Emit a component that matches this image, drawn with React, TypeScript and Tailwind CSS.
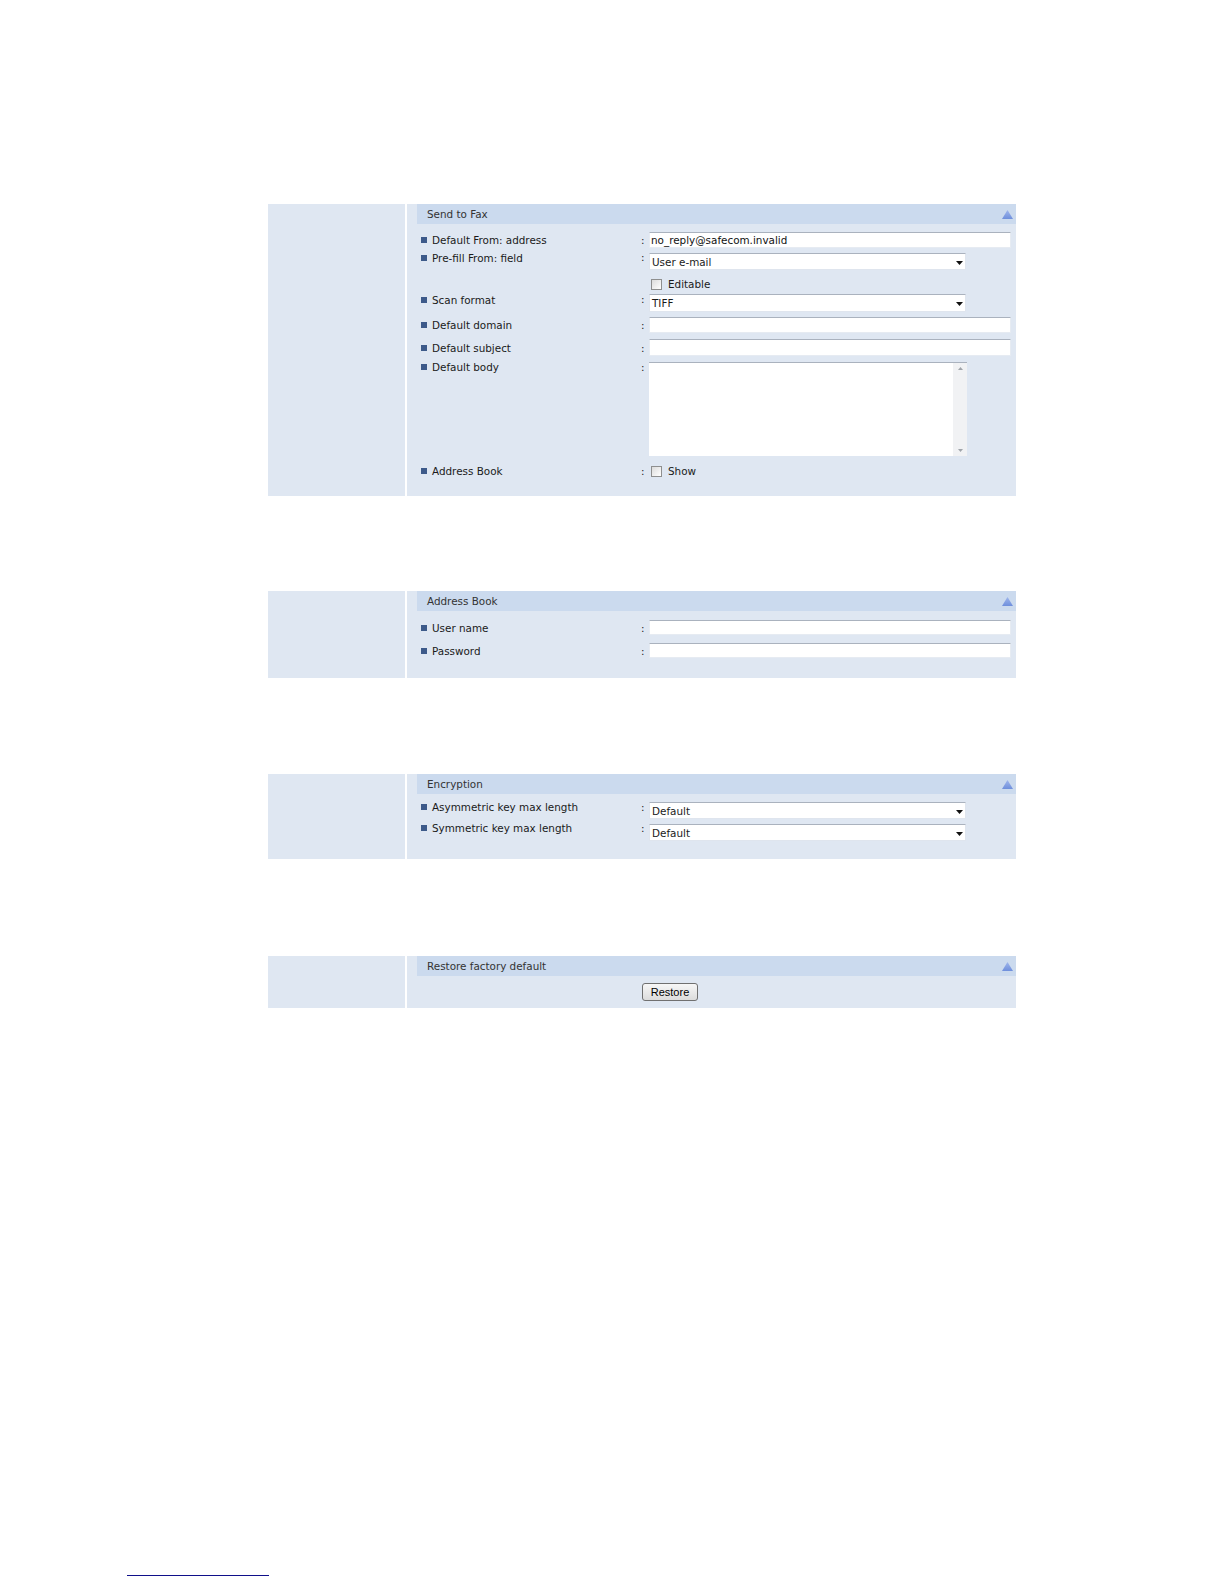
import React from "react";

function Tri() {
  return (
    <svg width="11" height="9" viewBox="0 0 11 9" className="ml-auto mr-[3px] mt-[1px]">
      <defs>
        <linearGradient id="tg" x1="0" y1="0" x2="0" y2="1">
          <stop offset="0" stopColor="#9fb6ec" />
          <stop offset="1" stopColor="#6f8fdc" />
        </linearGradient>
      </defs>
      <polygon points="5.5,0 11,9 0,9" fill="url(#tg)" />
    </svg>
  );
}

function Panel({ title, children, bodyClass }: { title: string; children: React.ReactNode; bodyClass: string }) {
  return (
    <div className="flex w-[748px] bg-[#dfe7f2]">
      <div className="w-[137px] shrink-0 bg-[#dfe7f2]" />
      <div className="w-[2px] shrink-0 bg-white" />
      <div className="flex-1 pl-[10px]">
        <div className="flex h-[20px] items-center bg-[#cbdaee] pl-[10px] text-[10.4px] leading-[12px] text-[#333]">
          <span>{title}</span>
          <Tri />
        </div>
        <div className={"pl-[4px] " + bodyClass}>{children}</div>
      </div>
    </div>
  );
}

function Label({ text, className = "" }: { text: string; className?: string }) {
  return (
    <div className={"flex w-[220px] shrink-0 items-center " + className}>
      <span className="mr-[5px] h-[6px] w-[6px] shrink-0 bg-[#3d5a8a]" />
      <span className="text-[10.4px] leading-[12px] text-[#1a1a1a]">{text}</span>
    </div>
  );
}

function Colon({ className = "" }: { className?: string }) {
  return <span className={"w-[8px] shrink-0 text-[10.4px] leading-[12px] text-[#222] " + className}>:</span>;
}

function Input({ value = "", className = "" }: { value?: string; className?: string }) {
  return (
    <div
      className={
        "flex w-[362px] items-center border border-[#e6ebf2] border-t-[#aab2be] bg-white pl-[1px] text-[10.4px] leading-[12px] text-[#111] " +
        className
      }
    >
      {value}
    </div>
  );
}

function Select({ value, className = "" }: { value: string; className?: string }) {
  return (
    <div
      className={
        "flex w-[317px] items-center justify-between border border-[#dfe5ee] border-t-[#aab2be] bg-white pl-[2px] pr-[2px] text-[10.4px] leading-[12px] text-[#1a1a1a] " +
        className
      }
    >
      <span>{value}</span>
      <svg width="7" height="4" viewBox="0 0 7 4" className="mt-[2px]">
        <path d="M0 0h7L3.5 4z" fill="#111" />
      </svg>
    </div>
  );
}

function Checkbox() {
  return (
    <span className="block h-[11px] w-[11px] shrink-0 border border-[#8e8f8f] bg-gradient-to-br from-[#dcdcdc] to-white" />
  );
}

export default function App() {
  return (
    <div className="min-h-[1584px] w-full bg-white pt-[204px] font-['DejaVu_Sans',sans-serif]">
      <div className="ml-[268px]">
        <Panel title="Send to Fax" bodyClass="pb-[19px]">
          <div className="mt-[8px] flex items-center">
            <Label text="Default From: address" />
            <Colon />
            <Input value="no_reply@safecom.invalid" className="h-[16px]" />
          </div>
          <div className="mt-[5px] flex items-start">
            <Label text="Pre-fill From: field" className="-mt-[1px]" />
            <Colon className="-mt-[2px]" />
            <Select value="User e-mail" className="h-[17px]" />
          </div>
          <div className="mt-[8px] flex items-center pl-[230px]">
            <Checkbox />
            <span className="ml-[6px] text-[10.4px] leading-[12px] text-[#1a1a1a]">Editable</span>
          </div>
          <div className="mt-[4px] flex items-start">
            <Label text="Scan format" />
            <Colon className="-mt-[1px]" />
            <Select value="TIFF" className="h-[18px]" />
          </div>
          <div className="mt-[5px] flex items-center">
            <Label text="Default domain" />
            <Colon />
            <Input className="h-[16px]" />
          </div>
          <div className="mt-[6px] flex items-center">
            <Label text="Default subject" />
            <Colon />
            <Input className="h-[17px]" />
          </div>
          <div className="mt-[6px] flex items-start">
            <Label text="Default body" className="-mt-[1px]" />
            <Colon className="-mt-[1px]" />
            <div className="flex h-[94px] w-[318px] border-t border-[#aab2be] bg-white">
              <div className="flex-1" />
              <div className="flex w-[14px] flex-col items-center justify-between bg-[#f1f2f4] py-[4px]">
                <svg width="5" height="3" viewBox="0 0 5 3">
                  <path d="M0 3h5L2.5 0z" fill="#a0a4aa" />
                </svg>
                <svg width="5" height="3" viewBox="0 0 5 3">
                  <path d="M0 0h5L2.5 3z" fill="#a0a4aa" />
                </svg>
              </div>
            </div>
          </div>
          <div className="mt-[9px] flex items-center">
            <Label text="Address Book" />
            <Colon />
            <span className="ml-[2px] flex">
              <Checkbox />
            </span>
            <span className="ml-[6px] text-[10.4px] leading-[12px] text-[#1a1a1a]">Show</span>
          </div>
        </Panel>

        <div className="mt-[95px]">
          <Panel title="Address Book" bodyClass="pb-[20px]">
            <div className="mt-[9px] flex items-center">
              <Label text="User name" />
              <Colon />
              <Input className="h-[15px]" />
            </div>
            <div className="mt-[8px] flex items-center">
              <Label text="Password" />
              <Colon />
              <Input className="h-[15px]" />
            </div>
          </Panel>
        </div>

        <div className="mt-[96px]">
          <Panel title="Encryption" bodyClass="pb-[18px]">
            <div className="mt-[8px] flex items-start">
              <Label text="Asymmetric key max length" className="-mt-[1px]" />
              <Colon className="-mt-[1px]" />
              <Select value="Default" className="h-[17px]" />
            </div>
            <div className="mt-[5px] flex items-start">
              <Label text="Symmetric key max length" className="-mt-[2px]" />
              <Colon className="-mt-[2px]" />
              <Select value="Default" className="h-[17px]" />
            </div>
          </Panel>
        </div>

        <div className="mt-[97px]">
          <Panel title="Restore factory default" bodyClass="pb-[7px]">
            <div className="mt-[7px] flex pl-[221px]">
              <button className="flex h-[18px] w-[56px] items-center justify-center rounded-[3px] border border-[#707070] bg-gradient-to-b from-[#f7f7f7] to-[#dcdcdc] font-['Liberation_Sans',Arial,sans-serif] text-[11px] leading-[12px] text-black">
                Restore
              </button>
            </div>
          </Panel>
        </div>
      </div>

      <div className="ml-[127px] mt-[567px] h-px w-[142px] bg-[#10108a]" />
    </div>
  );
}
